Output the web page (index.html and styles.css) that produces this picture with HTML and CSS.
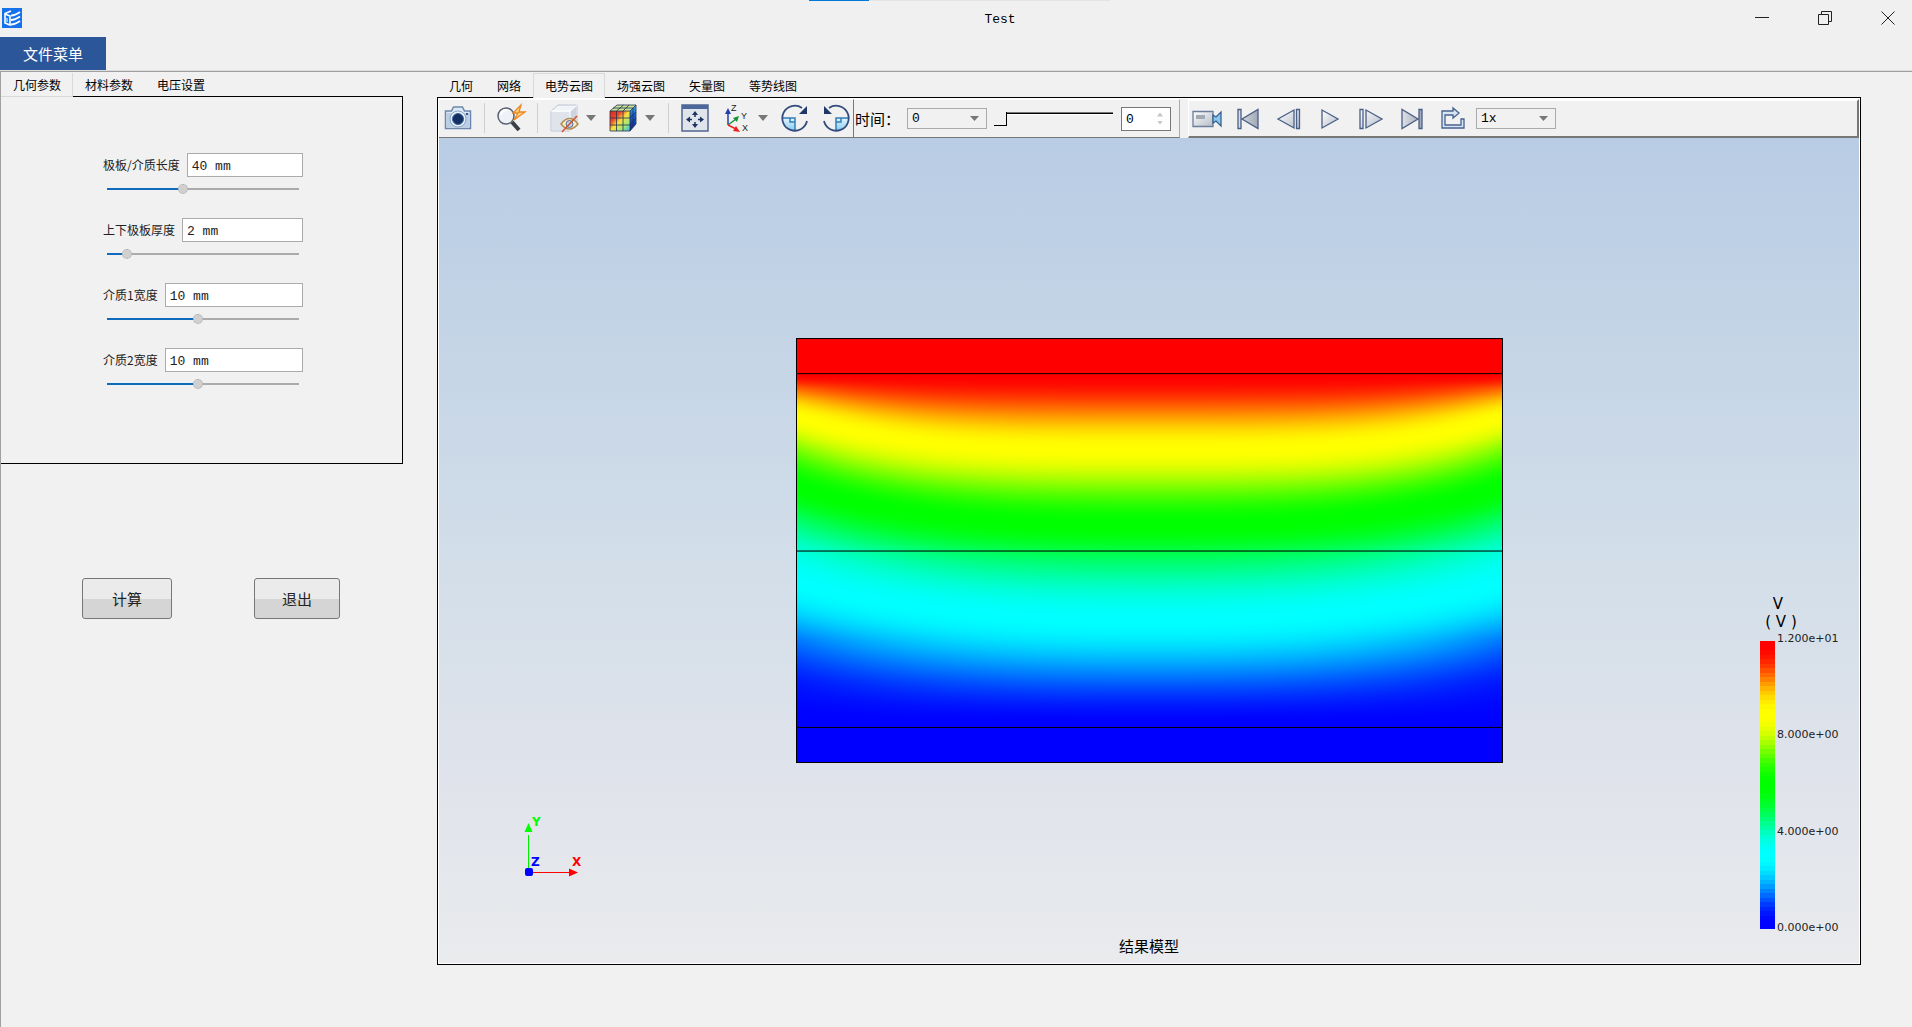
FILE: index.html
```html
<!DOCTYPE html>
<html lang="zh-CN">
<head>
<meta charset="utf-8">
<title>Test</title>
<link rel="stylesheet" href="styles.css">
</head>
<body>
<svg class="defs" aria-hidden="true">
  <defs>
    <linearGradient id="steel" x1="0" y1="0" x2="1" y2="1"><stop offset="0" stop-color="#fff"/><stop offset="1" stop-color="#b4bcc8"/></linearGradient>
    <linearGradient id="steelDark" x1="1" y1="0" x2="0" y2="0"><stop offset="0" stop-color="#a2a9b3"/><stop offset="1" stop-color="#dde1e7"/></linearGradient>
    <linearGradient id="sky" x1="0" y1="0" x2="0" y2="1"><stop offset="0" stop-color="#e4f4fd"/><stop offset="1" stop-color="#8ccdf0"/></linearGradient>
    <linearGradient id="contour" x1="0" y1="0" x2="1" y2="1"><stop offset="0" stop-color="#d8261c"/><stop offset=".3" stop-color="#ee4a2c"/><stop offset=".5" stop-color="#f8e13c"/><stop offset=".75" stop-color="#9ee87c"/><stop offset="1" stop-color="#36b4e6"/></linearGradient>
    <linearGradient id="contourSide" x1="0" y1="0" x2="0" y2="1"><stop offset="0" stop-color="#39b6e8"/><stop offset=".4" stop-color="#1763d0"/><stop offset="1" stop-color="#0a1f9c"/></linearGradient>
  </defs>
</svg>

<header class="titlebar">
  <div class="progress"><span class="progress-done"></span></div>
  <svg class="logo" viewBox="0 0 20 20" aria-hidden="true"><path d="M0 0h20v20H0z" fill="#1672ea"/><path d="M9 3L3 5.500V15l5 2V8L3 6" fill="none" stroke="#fff" stroke-width="1.600"/><path d="M5 10v4" stroke="#fff"/><path d="M9 7.500q4 0 9-3.500M9 12q4 0 9-3.500M9 16.500q4 0 9-3.500" fill="none" stroke="#fff" stroke-width="2"/></svg>
  <h1 class="title">Test</h1>
  <div class="window-buttons">
    <button type="button" aria-label="最小化"><svg viewBox="0 0 16 16"><path d="M1 7.500h14" /></svg></button>
    <button type="button" aria-label="还原"><svg viewBox="0 0 16 16"><path d="M4.500 4V1.500h10v10H12M1.500 4.500h10v10h-10z"/></svg></button>
    <button type="button" aria-label="关闭"><svg viewBox="0 0 16 16"><path d="M1.500 1.500l13 13M14.500 1.500l-13 13"/></svg></button>
  </div>
</header>
<nav class="menubar"><button type="button" class="menu">文件菜单</button></nav>

<main class="workspace">
  <section class="side">
    <div class="tabs" role="tablist">
      <button type="button" role="tab" class="tab tab-active" aria-selected="true">几何参数</button>
      <button type="button" role="tab" class="tab">材料参数</button>
      <button type="button" role="tab" class="tab">电压设置</button>
    </div>
    <form class="params">
      <div class="param">
        <div class="param-row"><label for="len">极板/介质长度</label><input id="len" type="text" value="40 mm"></div>
        <input class="range" type="range" aria-label="极板/介质长度" value="39" style="--v:39%">
      </div>
      <div class="param">
        <div class="param-row"><label for="thick">上下极板厚度</label><input id="thick" type="text" value="2 mm"></div>
        <input class="range" type="range" aria-label="上下极板厚度" value="8" style="--v:8%">
      </div>
      <div class="param">
        <div class="param-row"><label for="w1">介质1宽度</label><input id="w1" type="text" value="10 mm"></div>
        <input class="range" type="range" aria-label="介质1宽度" value="47" style="--v:47%">
      </div>
      <div class="param">
        <div class="param-row"><label for="w2">介质2宽度</label><input id="w2" type="text" value="10 mm"></div>
        <input class="range" type="range" aria-label="介质2宽度" value="47" style="--v:47%">
      </div>
    </form>
    <div class="actions">
      <button type="button" class="push">计算</button>
      <button type="button" class="push">退出</button>
    </div>
  </section>

  <section class="results">
    <div class="tabs" role="tablist">
      <button type="button" role="tab" class="tab">几何</button>
      <button type="button" role="tab" class="tab">网络</button>
      <button type="button" role="tab" class="tab tab-active" aria-selected="true">电势云图</button>
      <button type="button" role="tab" class="tab">场强云图</button>
      <button type="button" role="tab" class="tab">矢量图</button>
      <button type="button" role="tab" class="tab">等势线图</button>
    </div>
    <div class="frame">
      <div class="toolbar">
        <div class="group group-view">
          <button type="button" class="tool" aria-label="截图"><svg viewBox="0 0 28 28"><path d="M1.500 7h6l2-4h9l2 4h6v17.500h-25z" fill="#dce8f4" stroke="#6d86ad" stroke-width="1.500"/><path d="M3 9h22v14H3z" fill="#b9cfe6"/><circle cx="14" cy="15" r="8" fill="#e6f0fa" stroke="#8aa4c6"/><circle cx="14" cy="15" r="5.500" fill="#142f63" stroke="#3e6297"/><path d="M22 9h2v2h-2z" fill="#3a5a8a"/></svg></button>
          <span class="sep"></span>
          <button type="button" class="tool" aria-label="快速缩放"><svg viewBox="0 0 28 28"><path d="M15 18l7 8" stroke="#3a3f48" stroke-width="4"/><circle cx="9" cy="12" r="8" fill="#eef2f6" stroke="#596270" stroke-width="1.500"/><path d="M4 11q1-5 6-5" stroke="#fff" stroke-width="2" fill="none"/><path d="M24 1l-8 8h5l-4 7 11-8h-6z" fill="#ffd27c" stroke="#ec8622" stroke-width="1.300"/></svg></button>
          <span class="sep"></span>
          <button type="button" class="tool" aria-label="显示隐藏"><svg viewBox="0 0 28 28"><path d="M1 7l7-6h19v19l-7 7H1z" fill="#f1f3f8" stroke="#bcc4d2"/><path d="M2 8h18v18H2z" fill="#dfe3ec"/><path d="M20 8l6-6v18l-6 6z" fill="#cdd3df"/><path d="M1 7h19v20M20 7l7-6" fill="none" stroke="#fff"/><path d="M11 20q8.500-11 17 0-8.500 10-17 0z" fill="#fbeecb" stroke="#b08b50" stroke-width="1.500"/><circle cx="19.500" cy="20" r="3.500" fill="#c3cfe4" stroke="#5d6d92"/><path d="M12 28L27 12" stroke="#d4512c" stroke-width="1.500"/></svg></button>
          <span class="drop"></span>
          <button type="button" class="tool" aria-label="云图"><svg viewBox="0 0 28 28"><path d="M1 7l7-6h19l-6 6z" fill="#c6e49c"/><path d="M1 7h20v20H1z" fill="url(#contour)"/><path d="M21 7l6-6v19l-6 7z" fill="url(#contourSide)"/><path d="M1 7l7-6h19v19l-6 7H1zM1 7h20v20M21 7l6-6M7.500 7v20M14 7v20M1 14h20l6-6M1 21h20l6-7M7.500 7l7-6M14 7l6-6M4 4h20v19" fill="none" stroke="#24304e" stroke-width=".8"/></svg></button>
          <span class="drop"></span>
          <span class="sep"></span>
          <button type="button" class="tool" aria-label="适应窗口"><svg viewBox="0 0 28 28"><path d="M1 1h26v26H1z" fill="#e0e5ec" stroke="#50668f" stroke-width="1.500"/><path d="M1 1h26v4H1z" fill="#4d679a"/><path d="M14 9v4M14 18v4M7 15.500h4M17 15.500h4" stroke="#1d3260" stroke-width="1.500"/><path d="M14 7l3 4h-6zM14 24l3-4h-6zM5 15.500l4-3v6zM23 15.500l-4-3v6z" fill="#1d3260"/></svg></button>
          <button type="button" class="tool" aria-label="视图方向"><svg viewBox="0 0 28 28"><path d="M6 21V8" stroke="#2340a8" stroke-width="1.500"/><path d="M6 4l3 6H3z" fill="#2340a8"/><path d="M6 21l8-6" stroke="#16943a" stroke-width="1.500"/><path d="M17 12l-2 6-4-4z" fill="#16943a"/><path d="M6 21l8 4" stroke="#e22" stroke-width="1.500"/><path d="M18 28l-7-1 3-5z" fill="#e22"/><g font-family="Liberation Sans, sans-serif" font-size="9" fill="#222"><text x="9" y="7">Z</text><text x="19" y="15">Y</text><text x="20" y="27">X</text></g></svg></button>
          <span class="drop"></span>
          <button type="button" class="tool" aria-label="顺时针旋转"><svg viewBox="0 0 28 28"><path d="M2 14h12v12A12 12 0 0 1 2 14z" fill="url(#sky)"/><path d="M2 14h12v12M9 14v4h5" fill="none" stroke="#2f7fb8" stroke-width="1.500"/><path d="M26 17A12.500 12.500 0 1 1 21 4" fill="none" stroke="#324b7c" stroke-width="1.800"/><path d="M26 2v8h-8z" fill="#1e3768"/></svg></button>
          <button type="button" class="tool" aria-label="逆时针旋转"><svg viewBox="0 0 28 28"><path d="M26 14H14v12A12 12 0 0 0 26 14z" fill="url(#sky)"/><path d="M26 14H14v12M19 14v4h-5" fill="none" stroke="#2f7fb8" stroke-width="1.500"/><path d="M2 17A12.500 12.500 0 1 0 7 4" fill="none" stroke="#324b7c" stroke-width="1.800"/><path d="M2 2v8h8z" fill="#1e3768"/></svg></button>
        </div>
        <div class="group group-time">
          <label class="time-label" for="time">时间：</label>
          <span class="combo"><select id="time"><option>0</option></select></span>
          <input class="seek" type="range" aria-label="时间轴" value="0">
          <span class="spin"><input type="number" aria-label="帧" value="0"></span>
        </div>
        <div class="group group-play">
          <button type="button" class="media" aria-label="录制"><svg viewBox="0 0 30 24"><path d="M1 4.500h20v15H1z" fill="url(#steel)" stroke="#6c7d9b" stroke-width="1.300"/><path d="M4 8h9v4H4z" fill="#a3a9b4"/><path d="M21 8l3 2 5-5v14l-5-5-3 2z" fill="#8cc7ee" stroke="#35608f" stroke-width="1.300"/></svg></button>
          <button type="button" class="media" aria-label="第一帧"><svg viewBox="0 0 30 24"><path d="M5 2.500h3v19H5zM25 2.500v19L9 12z" fill="url(#steelDark)" stroke="#4a5f88" stroke-width="1.300"/></svg></button>
          <button type="button" class="media" aria-label="上一帧"><svg viewBox="0 0 30 24"><path d="M22.500 2.500h3v19h-3zM20 3v18L4 12z" fill="url(#steel)" stroke="#4a5f88" stroke-width="1.300"/></svg></button>
          <button type="button" class="media" aria-label="播放"><svg viewBox="0 0 30 24"><path d="M7 3v18l16-9z" fill="url(#steel)" stroke="#4a5f88" stroke-width="1.300"/></svg></button>
          <button type="button" class="media" aria-label="下一帧"><svg viewBox="0 0 30 24"><path d="M4 2.500h3v19H4zM10 3v18l16-9z" fill="url(#steel)" stroke="#4a5f88" stroke-width="1.300"/></svg></button>
          <button type="button" class="media" aria-label="最后一帧"><svg viewBox="0 0 30 24"><path d="M22 2.500h3v19h-3zM5 2.500v19L21 12z" fill="url(#steelDark)" stroke="#4a5f88" stroke-width="1.300"/></svg></button>
          <button type="button" class="media" aria-label="循环"><svg viewBox="0 0 30 24"><path d="M12 4h3V1l6 5-6 5V8H7v10h16v-6h3v9H4V4z" fill="#d6e4f4" stroke="#486290" stroke-width="1.300"/></svg></button>
          <span class="combo"><select aria-label="播放速度"><option>1x</option></select></span>
        </div>
      </div>
      <div class="view">
        <canvas class="plate" id="plate"></canvas>
        <svg class="triad" viewBox="0 0 64 72" role="img" aria-label="坐标轴">
          <path d="M8.500 60V24" stroke="#0e0"/><path d="M8.500 12l4 9h-8z" fill="#0f0"/>
          <path d="M9 61.500h40" stroke="#f00"/><path d="M58 61.500l-9 4v-8z" fill="#f00"/>
          <rect x="5" y="57" width="8" height="8" rx="2" fill="#00f"/>
          <text x="12" y="15" fill="#0f0">Y</text><text x="11" y="55" fill="#00f">Z</text><text x="52" y="55" fill="#f00">X</text>
        </svg>
        <p class="caption">结果模型</p>
        <div class="legend">
          <p class="legend-title">V</p>
          <p class="legend-title legend-unit">( V )</p>
          <div class="scale">
            <canvas class="bar" id="bar"></canvas>
            <ol class="ticks"><li>1.200e+01</li><li>8.000e+00</li><li>4.000e+00</li><li>0.000e+00</li></ol>
          </div>
        </div>
      </div>
    </div>
  </section>
</main>
<script src="app.js"></script>
</body>
</html>
```
FILE: styles.css
```css
* { box-sizing: border-box; }

body {
  margin: 0;
  min-height: 100vh;
  display: flex;
  flex-direction: column;
  background: #f1f1f1;
  color: #000;
  font: 12px/16px "Noto Sans CJK SC", sans-serif;
}

button, input, select { font: inherit; color: inherit; }
button { padding: 0; border: 0; background: none; }
p, ol, h1 { margin: 0; padding: 0; }
.defs { position: absolute; width: 0; height: 0; }

/* Title bar */
.titlebar {
  position: relative;
  height: 37px;
  display: flex;
  align-items: center;
  padding: 0 0 1px 2px;
  background: #f0f0f0;
}
.progress {
  position: absolute;
  top: 0;
  left: 809px;
  width: 301px;
  height: 1px;
  background: #e4e4e4;
}
.progress-done { display: block; width: 60px; height: 1px; background: #0078d7; }
.logo { width: 20px; height: 20px; }
.title {
  flex: 1;
  padding: 4px 0 0 240px;
  text-align: center;
  font: 13px/16px "Liberation Mono", monospace;
}
.window-buttons { display: flex; gap: 15px; }
.window-buttons button { width: 48px; height: 36px; display: grid; place-items: center; }
.window-buttons svg { width: 16px; height: 16px; fill: none; stroke: #222; }

.menubar { height: 34px; display: flex; background: #f0f0f0; border-bottom: 1px solid #dcdcdc; }
.menu { width: 106px; background: #2b579a; color: #fff; font-size: 15px; }

.workspace {
  flex: 1;
  display: flex;
  border-top: 1px solid #a0a0a0;
  border-left: 1px solid #a0a0a0;
  padding: 1px 51px 62px 0;
}

/* Tabs */
.tabs { display: flex; height: 24px; position: relative; z-index: 1; }
.tab { padding: 0 12px 1px; border: 1px solid transparent; border-width: 1px 0 0; }
.tab-active {
  background: #f1f1f1;
  border: 1px solid #d9d9d9;
  padding: 0 11px;
}

/* Parameter side */
.side { width: 402px; margin-right: 34px; }
.side .tab-active { border-width: 0 1px 1px 0; padding: 0 11px 0 12px; }
.params {
  height: 368px;
  margin-top: -1px;
  border: 1px solid #000;
  border-left: 0;
  padding: 56px 99px 0 102px;
  display: flex;
  flex-direction: column;
  gap: 18px;
  color: #222;
}
.param { display: flex; flex-direction: column; }
.param-row { display: flex; align-items: center; gap: 7px; height: 24px; }
.param-row input {
  flex: 1;
  min-width: 0;
  height: 24px;
  border: 1px solid #ababab;
  border-radius: 0;
  background: #fff;
  padding: 3px 4px 0;
  font: 13px/16px "Liberation Mono", monospace;
}
.range {
  -webkit-appearance: none;
  appearance: none;
  height: 22px;
  margin: 1px 4px 0;
  width: 192px;
  align-self: flex-start;
  background: none;
}
.range::-webkit-slider-runnable-track {
  height: 2px;
  background: linear-gradient(90deg, #0f6cbd var(--v), #ababab var(--v));
}
.range::-webkit-slider-thumb {
  -webkit-appearance: none;
  width: 10px;
  height: 10px;
  margin-top: -4px;
  border: 1px dotted #aaa;
  border-radius: 50%;
  background: #d0d0d0;
}
.actions { display: flex; gap: 82px; padding: 114px 0 0 81px; }
.push {
  width: 90px;
  height: 41px;
  border: 1px solid #777;
  border-radius: 3px;
  background: linear-gradient(#ebebeb 50%, #d5d5d5 50%);
  font-size: 15px;
  color: #222;
}
.push + .push { width: 86px; }

/* Results side */
.results { flex: 1; min-width: 0; display: flex; flex-direction: column; }
.frame {
  flex: 1;
  margin-top: -1px;
  border: 1px solid #000;
  padding: 1px;
  display: flex;
  flex-direction: column;
  background: #fff;
}
.results .tabs { height: 25px; }
.results .tab-active { border-bottom: 0; }

.toolbar { height: 39px; display: flex; background: #f1f1f1; }
.group { display: flex; align-items: center; border-bottom: 1px solid #777; border-top: 1px solid #fff; }
.group-view { width: 415px; padding: 0 0 1px 5px; border-right: 1px solid #777; }
.tool { width: 28px; height: 28px; flex: none; }
.tool svg, .media svg { display: block; width: 100%; height: 100%; overflow: visible; }
.sep { width: 1px; height: 30px; margin: 0 12px; background: #cfcfcf; }
.drop { width: 10px; height: 6px; margin: 0 13px 0 8px; background: #777; clip-path: polygon(0 0, 100% 0, 50% 100%); }
.drop + .sep { margin-left: 0; }
.tool + .tool { margin-left: 13px; }
.group-time { width: 326px; border-right: 1px solid #aaa; padding-left: 1px; }
.time-label { width: 52px; font-size: 15px; white-space: nowrap; }
.combo { position: relative; width: 80px; height: 21px; }
.combo select {
  appearance: none;
  width: 100%;
  height: 100%;
  border: 1px solid #aaa;
  border-radius: 0;
  background: none;
  padding: 1px 4px 0;
  font: 13px/16px "Liberation Mono", monospace;
}
.combo::after {
  content: "";
  position: absolute;
  right: 8px;
  top: 8px;
  width: 9px;
  height: 5px;
  background: #777;
  clip-path: polygon(0 0, 100% 0, 50% 100%);
}
.seek {
  -webkit-appearance: none;
  appearance: none;
  width: 119px;
  height: 14px;
  margin: 0 8px 0 7px;
  background: linear-gradient(#777 1px, #000 1px, #000 2px, #fff 2px, #fff 3px, transparent 3px);
}
.seek::-webkit-slider-thumb {
  -webkit-appearance: none;
  width: 13px;
  height: 14px;
  border: 1px solid #000;
  border-width: 0 1px 1px 0;
  background: #f1f1f1;
}
.spin { position: relative; width: 50px; height: 24px; }
.spin input {
  appearance: textfield;
  width: 100%;
  height: 100%;
  border: 1px solid #777;
  background: #fff;
  padding: 2px 4px 0;
  font: 13px/16px "Liberation Mono", monospace;
}
.spin input::-webkit-inner-spin-button { display: none; }
.spin::before, .spin::after {
  content: "";
  position: absolute;
  right: 8px;
  width: 6px;
  height: 4px;
  background: #c4c4c4;
}
.spin::before { top: 6px; clip-path: polygon(50% 0, 100% 100%, 0 100%); }
.spin::after { bottom: 6px; clip-path: polygon(0 0, 100% 0, 50% 100%); }
.group-play {
  flex: 1;
  margin-left: 8px;
  padding-left: 3px;
  gap: 11px;
  border: 2px solid #777;
  border-width: 2px 2px 2px 1px;
  border-top-color: #fff;
  border-left-color: #fff;
}
.media { width: 30px; height: 24px; flex: none; }
.group-play .combo { margin-left: -3px; }

/* Result view */
.view {
  flex: 1;
  position: relative;
  display: grid;
  place-items: center;
  background: linear-gradient(#b8cce4, #d4dfe9 55%, #e0e3eb 78%, #e9ebed);
}
.plate { width: calc(50% - 3px); aspect-ratio: 5 / 3; }
.triad {
  position: absolute;
  left: 81px;
  bottom: 80px;
  width: 64px;
  height: 72px;
  font: bold 12px "DejaVu Sans", sans-serif;
}
.caption { position: absolute; bottom: 7px; font-size: 15px; line-height: 20px; }
.legend {
  position: absolute;
  right: 19px;
  bottom: 27px;
  width: 80px;
  font: 11px/16px "DejaVu Sans", sans-serif;
}
.legend-title { width: 36px; font-size: 15px; line-height: 18px; text-align: center; }
.legend-unit { width: 42px; }
.scale { display: flex; gap: 2px; align-items: flex-end; }
.bar { width: 15px; height: 288px; margin-bottom: 7px; }
.ticks {
  height: 305px;
  display: flex;
  flex-direction: column;
  justify-content: space-between;
  list-style: none;
  color: #222;
}
```
FILE: app.js
```js
// Colour ramp: red, yellow, green, cyan, blue, eased between neighbours.
const RAMP = [[255, 0, 0], [255, 255, 0], [0, 255, 0], [0, 255, 255], [0, 0, 255]];

function colour(t) {
  const s = Math.min(Math.max(t, 0), 1) * 4;
  const i = Math.min(Math.floor(s), 3);
  const f = (1 - Math.cos(Math.PI * (s - i))) / 2;
  return RAMP[i].map((c, k) => c + (RAMP[i + 1][k] - c) * f);
}

// Potential drop through the two dielectrics, by depth (0 top, 1 bottom).
const CENTRE = [[0, 0], [0.5, 0.588], [1, 1]];
const EDGE = [[0, 0], [0.037, 0.1], [0.076, 0.175], [0.12, 0.25], [0.21, 0.375], [0.316, 0.5],
  [0.41, 0.61], [0.5, 0.69], [0.593, 0.75], [0.745, 0.875], [0.87, 0.95], [1, 1]];

function sample(points, d) {
  for (let i = 1; i < points.length; i++) {
    const [x0, y0] = points[i - 1], [x1, y1] = points[i];
    if (d <= x1) return y0 + (y1 - y0) * (d - x0) / (x1 - x0);
  }
  return 1;
}

function drawPlate() {
  const canvas = document.getElementById("plate");
  const w = canvas.width = canvas.clientWidth;
  const h = canvas.height = canvas.clientHeight;
  const ctx = canvas.getContext("2d");
  const img = ctx.createImageData(w, h);
  for (let y = 0; y < h; y++) {
    const d = (y / h - 1 / 12) / (10 / 12);
    const inside = d > 0 && d < 1;
    const c = inside ? sample(CENTRE, d) : d <= 0 ? 0 : 1;
    const e = inside ? sample(EDGE, d) : c;
    const p = 2.5 + Math.max(0, 2 - d * 4);
    for (let x = 0; x < w; x++) {
      const k = Math.pow(Math.abs(2 * x / w - 1), p);
      const [r, g, b] = colour(c + (e - c) * k);
      img.data.set([r, g, b, 255], (y * w + x) * 4);
    }
  }
  ctx.putImageData(img, 0, 0);
  ctx.fillStyle = "#000";
  for (const f of [0, 1 / 12, 0.5, 11 / 12]) ctx.fillRect(0, Math.floor(h * f), w, 1);
  ctx.fillRect(0, h - 1, w, 1);
  ctx.fillRect(0, 0, 1, h);
  ctx.fillRect(w - 1, 0, 1, h);
}

function drawBar() {
  const canvas = document.getElementById("bar");
  canvas.width = 15;
  canvas.height = 288;
  const ctx = canvas.getContext("2d");
  for (let i = 0; i < 64; i++) {
    ctx.fillStyle = `rgb(${colour(i / 63).map(Math.round).join()})`;
    ctx.fillRect(0, Math.round(i * 4.5), 15, 5);
  }
}

drawPlate();
drawBar();
addEventListener("resize", drawPlate);
```
